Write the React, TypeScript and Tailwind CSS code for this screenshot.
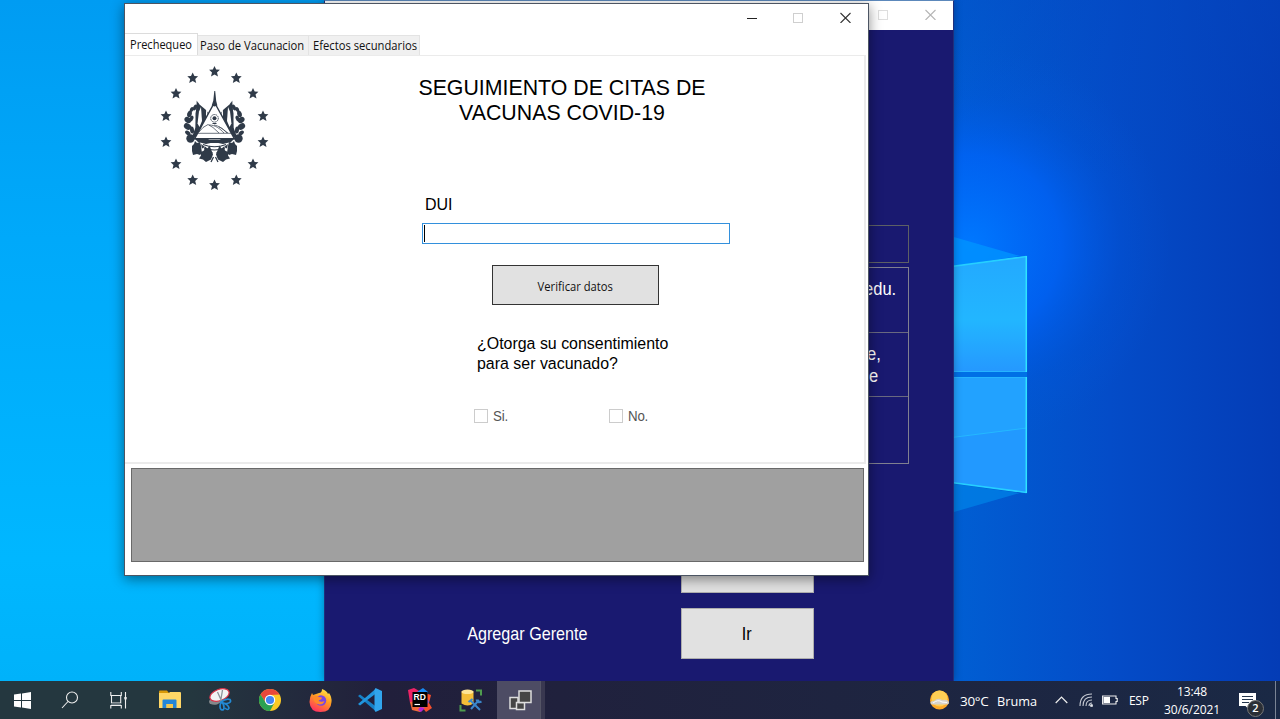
import React from "react";

const STAR_POINTS: [number, number][] = [
  [54.5, 11.5], [76.3, 18], [93, 33.5], [103, 56], [103, 82], [93, 104], [76.3, 120],
  [54.5, 125], [32.7, 120], [16, 104], [6, 82], [6, 56], [16, 33.5], [32.7, 18],
];

function CoatOfArms() {
  const side = (
    <g fill="#2f3a48">
      <path d="M37.500 41.500l2 3 6 5 3 4-13 25-3-3 3-8 0-14z" />
      <path d="M41 47l1 14-2.500 6-2-3.500 1.500-12z" fill="#fff" />
      <path d="M46 48.500l1.500 5-1.500 5z" fill="#fff" />
      <path d="M36.700 40.500l1.500 3-1.800 32-1 0z" />
      <path d="M32.500 58l1.500 8-1.500 5-1-5z" fill="#fff" />
      <ellipse cx="35" cy="47.500" rx="1.800" ry="3.200" transform="rotate(28 35 47.500)" />
      <ellipse cx="31.700" cy="49.500" rx="1.800" ry="2.600" transform="rotate(28 31.700 49.500)" />
      <ellipse cx="29.500" cy="54" rx="2.300" ry="3.300" transform="rotate(15 29.500 54)" />
      <ellipse cx="27.800" cy="60" rx="3.600" ry="2.800" transform="rotate(38 27.800 60)" />
      <ellipse cx="31.500" cy="58.500" rx="1.800" ry="3" transform="rotate(20 31.500 58.500)" />
      <ellipse cx="27.500" cy="66.500" rx="3.900" ry="2.900" transform="rotate(32 27.500 66.500)" />
      <ellipse cx="32" cy="70" rx="2" ry="3.600" transform="rotate(-8 32 70)" />
      <ellipse cx="27.800" cy="73" rx="3" ry="2" transform="rotate(40 27.800 73)" />
      <ellipse cx="30.500" cy="78.500" rx="4.200" ry="4.200" transform="rotate(45 30.500 78.500)" />
      <path d="M32 86l2-2 1-3 2 2 3-1 1 4 1 7-2 2-3-1-4 1-1-4z" />
      <path d="M41 92l3-1.500 1-4 2.500 2 2-3 2 5 1.500 4-2 5-5 2.500-3-2.500-4-1 2-3z" />
      <path d="M35 79h13l5 3.500-7 1.500-8-2z" />
      <path d="M41 84l4 3-3 1.500z" />
      <path d="M52 92l-2 7M53.500 97l-2.500 5" stroke="#2f3a48" strokeWidth="1.300" fill="none" />
    </g>
  );
  return (
    <svg className="block h-[140px] w-[109px]" viewBox="0 0 109 140">
      {STAR_POINTS.map(([x, y], i) => (
        <path
          key={i}
          transform={`translate(${x} ${y})`}
          d="M0-5.600L1.700-1.900 5.400-1.700 2.500.900 3.500 5 0 2.900-3.500 5-2.500.900-5.400-1.700-1.700-1.900z"
          fill="#2f3a48"
        />
      ))}
      {side}
      <g transform="translate(109 0) scale(-1 1)">{side}</g>
      <path d="M54.500 42.500L74.500 78.800h-40z" fill="#fff" stroke="#2f3a48" strokeWidth="1.400" />
      <path d="M54.300 31l.9 0 1 10 1.200 4.500-2.900 1-2.800-1 1.600-5z" fill="#2f3a48" />
      <circle cx="54.500" cy="58.300" r="3.800" fill="none" stroke="#2f3a48" strokeWidth=".9" strokeDasharray="1.400 .5" />
      <circle cx="54.500" cy="58.300" r="2" fill="#2f3a48" />
      <path d="M52.500 63h4v1h-4z" fill="#2f3a48" />
      <path d="M39 72l4-4.500 5-3 5 3 6 5.500M49 65c7 0 11 4 15 8M54 65c5 1 8 3 13 8M59 67c3 1 6 4 9 6M37 73.300h35" fill="none" stroke="#2f3a48" strokeWidth=".7" />
      <path d="M43 84.500q11.500 4.500 23 0M44 88q10.500 4 21 0" fill="none" stroke="#2f3a48" strokeWidth="1.100" />
      <path d="M47 80h15l-4 3h-7z" fill="#2f3a48" />
    </svg>
  );
}

function Wallpaper() {
  return (
    <svg className="absolute inset-0 h-[681px] w-[1280px]" viewBox="0 0 1280 681">
      <defs>
        <linearGradient id="left" x1="0" y1="0" x2="0" y2="1">
          <stop offset="0" stopColor="#009cf2" />
          <stop offset=".35" stopColor="#00a9fa" />
          <stop offset=".82" stopColor="#00b7ff" />
          <stop offset="1" stopColor="#00b2fa" />
        </linearGradient>
        <linearGradient id="right" x1="0" y1="0" x2="1" y2="0">
          <stop offset="0" stopColor="#0060d4" />
          <stop offset=".5" stopColor="#044cc8" />
          <stop offset="1" stopColor="#043cb6" />
        </linearGradient>
        <linearGradient id="topShade" x1="0" y1="0" x2="0" y2="1">
          <stop offset="0" stopColor="#0448c0" stopOpacity=".35" />
          <stop offset="1" stopColor="#0448c0" stopOpacity="0" />
        </linearGradient>
        <radialGradient id="glow" gradientUnits="userSpaceOnUse" cx="970" cy="245" r="200">
          <stop offset="0" stopColor="#0078ff" />
          <stop offset=".45" stopColor="#0064fa" stopOpacity=".75" />
          <stop offset=".75" stopColor="#0058e4" stopOpacity=".25" />
          <stop offset="1" stopColor="#0058dc" stopOpacity="0" />
        </radialGradient>
        <linearGradient id="paneTop" x1="0" y1="0" x2="0" y2="1">
          <stop offset="0" stopColor="#23a9ff" />
          <stop offset=".55" stopColor="#22b6ff" />
          <stop offset="1" stopColor="#2598ff" />
        </linearGradient>
      </defs>
      <rect width="640" height="681" fill="url(#left)" />
      <rect x="940" width="340" height="681" fill="url(#right)" />
      <rect x="940" width="340" height="180" fill="url(#topShade)" />
      <rect x="940" width="340" height="681" fill="url(#glow)" />
      <path d="M940 233L1020 256 940 268z" fill="#0094ff" fillOpacity=".8" />
      <path d="M940 516L1020 493 940 482z" fill="#0084e8" fillOpacity=".7" />
      <path d="M940 268L1027 256V372H940z" fill="url(#paneTop)" />
      <path d="M940 372H1027V377H940z" fill="#0070e6" />
      <path d="M940 377H1027V493L940 481z" fill="#2299ff" />
      <path d="M940 439L1027 428V377H940z" fill="#22a2ff" />
      <path d="M940 439L1027 428" stroke="#25b8ff" />
      <path d="M940 268L1026.500 256.500M940 481L1026.500 492.500" fill="none" stroke="#26d0ff" strokeWidth="1.500" />
      <path d="M940 371.500H1026.500M940 377.500H1026.500" fill="none" stroke="#26b4ff" />
      <path d="M1026.300 256V372M1026.300 377V493" stroke="#2fe4ff" strokeWidth="1.500" />
    </svg>
  );
}

function CaptionButtons({ muted = false }: { muted?: boolean }) {
  return (
    <svg className="block h-[12px] w-[106px]" viewBox="0 0 106 12" fill="none">
      {!muted && <path d="M0 7.500h10" stroke="#222" />}
      <rect x="46.500" y="2.500" width="9" height="9" stroke={muted ? "#dedede" : "#cfcfcf"} />
      <path d="M93.500 2l10 10M103.500 2L93.500 12" stroke={muted ? "#b5b5b5" : "#333"} strokeWidth="1.100" />
    </svg>
  );
}

function ManagerWindow() {
  return (
    <section className="absolute top-0 left-[324px] flex h-[681px] w-[630px] flex-col border-x border-t border-t-[#5c88bb] border-x-[#20307c] bg-[#191970] font-['Liberation_Sans',sans-serif] text-white shadow-[0_0_8px_rgba(0,0,0,0.3)]">
      <header className="flex h-[29px] shrink-0 items-start justify-end bg-white pt-[7px] pr-[15px]">
        <CaptionButtons muted />
      </header>
      <div className="mt-[195px] mr-[44px] ml-auto h-[38px] w-[400px] shrink-0 border border-[#5d6065]" />
      <div className="mt-[4px] mr-[44px] ml-auto flex h-[197px] w-[400px] shrink-0 flex-col border border-[#808090] text-right text-[19px] leading-[22px]">
        <div className="flex h-[65px] justify-end border-b border-[#696980] pt-[10px] pr-[12px]">
          <span className="origin-right scale-x-[0.87]">@uca.edu.</span>
        </div>
        <div className="flex h-[64px] flex-col items-end border-b border-[#696980] pt-[10px]">
          <span className="mr-[27px] origin-right scale-x-[0.87]">gerente,</span>
          <span className="mr-[30px] origin-right scale-x-[0.87]">de</span>
        </div>
      </div>
      <div className="mt-[78px] flex flex-col items-end gap-[15px] pr-[139px]">
        <div className="h-[51px] w-[133px] border border-[#adadad] bg-[#e1e1e1]" />
        <div className="flex items-center">
          <span className="mt-[2px] mr-[93px] origin-right scale-x-[0.85] text-[19px] whitespace-nowrap">Agregar Gerente</span>
          <button className="h-[51px] w-[133px] border border-[#adadad] bg-[#e1e1e1] pt-px text-[19px] text-black">
            <span className="mr-[2px] inline-block scale-x-[0.85]">Ir</span>
          </button>
        </div>
      </div>
    </section>
  );
}

function CheckOption({ label }: { label: string }) {
  return (
    <label className="flex h-[16px] w-[135px] items-center gap-[5px] text-[#555]">
      <span className="h-[14px] w-[14px] border border-[#ccc] bg-white" />
      <span className="origin-left scale-x-[0.95] text-[14px] tracking-[-0.200px]">{label}</span>
    </label>
  );
}

function VaccinationWindow() {
  return (
    <section className="absolute top-[3px] left-[124px] flex h-[573px] w-[745px] flex-col border border-[#4c5563] bg-white font-['Liberation_Sans',sans-serif] text-black shadow-[0_3px_12px_rgba(0,0,0,0.45)]">
      <header className="flex h-[29px] shrink-0 justify-end pt-[7px] pr-[15px]">
        <CaptionButtons />
      </header>
      <nav className="flex h-[22px] shrink-0 items-end font-['Open_Sans',sans-serif] text-[12px] text-[#111]">
        <div className="flex h-[22px] w-[73px] items-center border-t border-r border-[#dcdcdc] pl-[5px]">
          <span className="origin-left scale-x-[0.92]">Prechequeo</span>
        </div>
        <div className="flex h-[20px] w-[111px] items-center border-t border-r border-[#e3e3e3] bg-[#f0f0f0] pl-[2px] whitespace-nowrap">
          <span className="origin-left scale-x-[0.935]">Paso de Vacunacion</span>
        </div>
        <div className="flex h-[20px] w-[111px] items-center border-t border-r border-[#e3e3e3] bg-[#f0f0f0] pl-[3.500px] whitespace-nowrap">
          <span className="origin-left scale-x-[0.935]">Efectos secundarios</span>
        </div>
      </nav>
      <main className="flex h-[409px] w-[741px] shrink-0 border-t border-r-2 border-b-2 border-[#ebebeb]">
        <div className="ml-[35px] pt-[4px]">
          <CoatOfArms />
        </div>
        <div className="ml-[145px] w-[330px] pt-[20px]">
          <h1 className="w-[296px] text-center text-[21.330px] leading-[25px] whitespace-nowrap">
            SEGUIMIENTO DE CITAS DE
            <br />
            VACUNAS COVID-19
          </h1>
          <p className="mt-[69px] ml-[11px] text-[16px] leading-[20px]">DUI</p>
          <div className="mt-[8px] ml-[8px] h-[21px] w-[308px] border border-[#3390dc] pt-px pl-px">
            <div className="h-[17px] w-px bg-black" />
          </div>
          <button className="mt-[21px] ml-[78px] block h-[40px] w-[167px] border border-[#333] bg-[#e1e1e1] pt-[3px] font-['Open_Sans',sans-serif] text-[12px] text-[#111]">
            <span className="inline-block scale-x-[0.935]">Verificar datos</span>
          </button>
          <p className="mt-[29px] ml-[63px] text-[15.950px] leading-[20px] whitespace-nowrap">
            ¿Otorga su consentimiento
            <br />
            para ser vacunado?
          </p>
          <div className="mt-[34px] ml-[60px] flex">
            <CheckOption label="Si." />
            <CheckOption label="No." />
          </div>
        </div>
      </main>
      <div className="mt-[4px] ml-[6px] h-[94px] w-[733px] shrink-0 border border-[#696969] bg-[#a0a0a0]" />
    </section>
  );
}

function Slot({ children, active = false }: { children: React.ReactNode; active?: boolean }) {
  return (
    <div className={active ? "flex h-full w-[44px] items-center justify-center border-r border-[#555566] bg-[#4d4c64]" : "flex h-full w-[50px] items-center justify-center"}>
      {children}
    </div>
  );
}

function Taskbar() {
  return (
    <footer className="flex h-[38px] w-full items-center bg-linear-to-r from-[#24373f] from-15% via-[#211f3b] via-30% to-[#1a2945] font-['Open_Sans',sans-serif] text-white">
      <div className="flex h-full w-[44px] items-center justify-center">
        <svg className="h-[17px] w-[17px]" viewBox="0 0 17 17" fill="#fff">
          <path d="M0 2.600L7 1.500V8H0zM8 1.400L17 0v8H8zM0 9h7v6.500L0 14.500zM8 9h9v8l-9-1.400z" />
        </svg>
      </div>
      <div className="flex h-full w-[52px] items-center justify-center">
        <svg className="h-[18px] w-[18px]" viewBox="0 0 18 18" fill="none" stroke="#eee" strokeWidth="1.100">
          <circle cx="11" cy="6.500" r="5.500" />
          <path d="M7 10.500L1 17" />
        </svg>
      </div>
      <div className="flex h-full w-[44px] items-center justify-center">
        <svg className="h-[17px] w-[17px]" viewBox="0 0 17 17" fill="none" stroke="#eee" strokeWidth="1.100">
          <path d="M.8 0v3.500h10.500V0M.8 16.500V13.500h10.500V16.500M1.500 3.500v7.500h9.200V3.500M15.500 0v16.500" />
          <path d="M1 11h10v2H1z" fill="#66737a" stroke="none" />
          <path d="M14.300 5h2.400v2.400h-2.400z" fill="#eee" stroke="none" />
        </svg>
      </div>
      <div className="ml-[5px] flex h-full">
        <Slot>
          <svg className="h-[20px] w-[22px]" viewBox="0 0 22 20">
            <path d="M0 1.500Q0 .5 1 .5h7l2 2.500H0z" fill="#d99a08" />
            <path d="M0 3h10l1-1h10q1 0 1 1v15H0z" fill="#ffd766" />
            <path d="M3.500 18v-7.500q0-1 1-1h12q1 0 1 1V18h-3.500v-4H7.500v4z" fill="#2286d8" />
            <path d="M7.500 14h6.500v4H7.500z" fill="#f3c64d" />
          </svg>
        </Slot>
        <Slot>
          <svg className="h-[24px] w-[24px]" viewBox="0 0 24 24">
            <path d="M1 14q0-3 4-4l9 0 1 3-6 3.500q-7 1-8-2.500z" fill="#85898c" />
            <ellipse cx="11.500" cy="7" rx="10" ry="5.600" transform="rotate(-20 11.500 7)" fill="#f1f3f4" stroke="#d9344a" strokeWidth="1.200" />
            <path d="M9.500 4l4.500 10M14.500 2l-2 12" stroke="#8a9299" strokeWidth="1.300" />
            <path d="M13 14q5-4 9-2.500 2 3-3 4-3 .5-6-1.500zM13 14q-2 5 0 7.500 3 1.500 3-2 0-4-3-5.500zM14 15q6 1 7 5-1 3-4 0" fill="none" stroke="#2289d4" strokeWidth="1.700" />
          </svg>
        </Slot>
        <Slot>
          <svg className="h-[22px] w-[22px]" viewBox="0 0 22 22">
            <circle cx="11" cy="11" r="11" fill="#fbc926" />
            <path d="M1.470 5.500A11 11 0 0 1 20.530 5.500L11 6 6.700 13.500z" fill="#e8483c" />
            <path d="M1.470 5.500A11 11 0 0 0 11 22L15.500 13.500 6.700 13.500z" fill="#2ba152" />
            <circle cx="11" cy="11" r="5.200" fill="#fff" />
            <circle cx="11" cy="11" r="4.100" fill="#4285f4" />
          </svg>
        </Slot>
        <Slot>
          <svg className="h-[23px] w-[23px]" viewBox="0 0 23 23">
            <defs>
              <linearGradient id="fox" x1=".8" y1="0" x2=".3" y2="1">
                <stop offset="0" stopColor="#ffe94a" />
                <stop offset=".45" stopColor="#ff9a22" />
                <stop offset="1" stopColor="#ff2f62" />
              </linearGradient>
            </defs>
            <path d="M3 4l1 2 3-1 3-1Q13 4 13 0q5 2 6 5l1-1q3 4 2.500 9-.5 10-11 10T.5 13Q.5 8 3 4z" fill="url(#fox)" />
            <circle cx="12" cy="11.500" r="5.200" fill="#7746e4" />
            <path d="M4 8q4-2 6 0l3 .5q0 2-2.500 2.500l-1 1q3 1.500 6 0-1 3.500-5 3.500-6-1-6.500-7.500z" fill="#ff8a2a" />
          </svg>
        </Slot>
        <Slot>
          <svg className="h-[24px] w-[24px]" viewBox="0 0 24 24">
            <path d="M0 8l2-1.500 16 12-.5 4.500z" fill="#1681c8" />
            <path d="M0 16l2 1.500 16-12-.5-4.500z" fill="#2196df" />
            <path d="M17.500 0L24 3v18l-6.500 3L16.500 22V2z" fill="#31a5ec" />
          </svg>
        </Slot>
        <Slot>
          <svg className="h-[24px] w-[24px]" viewBox="0 0 24 24">
            <path d="M0 2l6-2 7 4-4 15-7-4z" fill="#ee2366" />
            <path d="M9 4l6-4 5 4-3 6z" fill="#178af3" />
            <path d="M17 5l6 2-2 8 3 5-6 4-4-5z" fill="#f7502d" />
            <path d="M2 14l7-1 8 7-5 4-8-2z" fill="#f06a3a" />
            <path d="M12 19l5 1-4 4-3-2z" fill="#b426d5" />
            <path d="M18 7l3 7-3 4z" fill="#8755d0" />
            <rect x="4.500" y="4" width="15" height="15" fill="#000" />
            <text x="5.500" y="11.500" fill="#fff" fontSize="8.500" fontWeight="700" fontFamily="Liberation Sans">RD</text>
            <path d="M6.500 16.500h5.500" stroke="#fff" strokeWidth="1.200" />
          </svg>
        </Slot>
        <Slot>
          <svg className="h-[23px] w-[23px]" viewBox="0 0 23 23">
            <path d="M2.500 2.500v12q6 4 12 0v-12z" fill="#f4bd38" />
            <ellipse cx="8.500" cy="2.800" rx="6" ry="2.300" fill="#ffe595" />
            <path d="M17 1.500h5v5M1.500 16v5.500h5" fill="none" stroke="#4f9c4e" strokeWidth="2" />
            <path d="M12 12l9 9M20 11l-8 9M9.500 13l4-3M17.500 10.500q1 4 5 2" fill="none" stroke="#3a86ca" strokeWidth="2" />
          </svg>
        </Slot>
      </div>
      <div className="ml-[2px] h-full">
        <Slot active>
          <svg className="ml-[4px] h-[21px] w-[23px]" viewBox="0 0 23 21" fill="#454545" stroke="#ddd" strokeWidth="1.500">
            <rect x="1" y="7.500" width="8" height="11" />
            <rect x="7.500" y="12.500" width="8" height="7" />
            <rect x="10" y="1" width="12" height="11.500" />
          </svg>
        </Slot>
      </div>
      <div className="h-full w-[4px] bg-[#393850]" />
      <div className="ml-auto flex h-full items-center text-[13.500px] whitespace-nowrap">
        <svg className="h-[20px] w-[22px]" viewBox="0 0 22 20">
          <circle cx="10.500" cy="10" r="9.500" fill="#ffa928" />
          <circle cx="10.500" cy="8.500" r="8" fill="#ffcf55" />
          <path d="M2 14q-2-3 3-3 4-4 8-1 7-1 7 3 0 1.500-5 1.500H5q-2 0-3-.5z" fill="#d9d2c8" />
          <path d="M4 13q5-4 9-1l5 .5" stroke="#fff" fill="none" />
        </svg>
        <div className="ml-[9px] flex w-[95px] pt-[3px]">
          <span className="w-[37px] tracking-[-0.300px]">30°C</span>
          <span className="origin-left scale-x-[0.94]">Bruma</span>
        </div>
        <svg className="h-[8px] w-[13px]" viewBox="0 0 13 8" fill="none" stroke="#eee" strokeWidth="1.200">
          <path d="M.7 7L6.500 1.200 12.300 7" />
        </svg>
        <svg className="ml-[11px] h-[14px] w-[14px]" viewBox="0 0 14 14" fill="none" stroke="#c5c9d2" strokeWidth="1.100">
          <path d="M1 13Q1 1 13 1M4 13Q4 4 13 4M7 13q0-6 6-6M10 13q0-3 3-3" />
          <circle cx="12.500" cy="12.500" r="1" fill="#fff" />
        </svg>
        <svg className="ml-[9px] h-[10px] w-[16px]" viewBox="0 0 16 10">
          <path d="M.6 1h13.400v2.500h1.200v3H14V9H.6z" fill="none" stroke="#eee" strokeWidth="1.100" />
          <path d="M1.500 2h6.500v6H1.500z" fill="#fff" />
        </svg>
        <span className="ml-[11px] w-[34px] pt-[2px] text-[12px] tracking-[-0.300px]">ESP</span>
        <div className="flex w-[58px] flex-col items-center pt-[2px] text-[12px] leading-[18.500px] tracking-[-0.100px]">
          <span>13:48</span>
          <span>30/6/2021</span>
        </div>
        <div className="relative mr-[10px] ml-[18px] h-[28px] w-[26px]">
          <svg className="mt-[7px] h-[17px] w-[18px]" viewBox="0 0 18 17">
            <path d="M0 0h17v13H10v3.500L6.500 13H0z" fill="#fff" />
            <path d="M3 3.500h11M3 6.500h11M3 9.500h7" stroke="#24364d" />
          </svg>
          <span className="absolute top-[14px] left-[8px] flex h-[17px] w-[17px] items-center justify-center rounded-full border border-[#777] bg-[#2b2f36] text-[11px] font-semibold">2</span>
        </div>
        <div className="mr-[4px] h-[38px] w-px bg-[#7a8494]" />
      </div>
    </footer>
  );
}

export default function App() {
  return (
    <div className="flex h-[719px] w-[1280px] flex-col overflow-hidden bg-[#00a5f5]">
      <div className="relative h-[681px] shrink-0 overflow-hidden">
        <Wallpaper />
        <ManagerWindow />
        <VaccinationWindow />
      </div>
      <Taskbar />
    </div>
  );
}
